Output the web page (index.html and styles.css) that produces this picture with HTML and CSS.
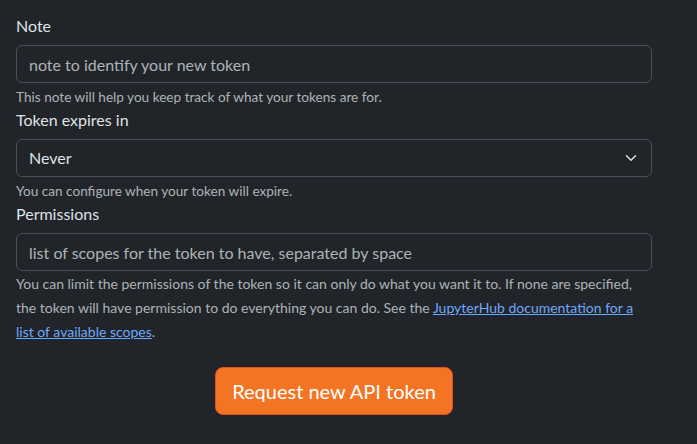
FILE: index.html
```html
<!DOCTYPE html>
<html lang="en">
<head>
<meta charset="utf-8">
<title>Token</title>
<link rel="stylesheet" href="styles.css">
</head>
<body>
<form class="form">
  <div class="field">
    <label class="label" for="note">Note</label>
    <input class="control" id="note" type="text" placeholder="note to identify your new token">
    <div class="help">This note will help you keep track of what your tokens are for.</div>
  </div>
  <div class="field">
    <label class="label" for="exp">Token expires in</label>
    <div class="control select" id="exp">
      <span>Never</span>
      <svg class="chev" width="16" height="12" viewBox="0 0 16 16"><path d="m2 5 6 6 6-6" fill="none" stroke="#dee2e6" stroke-linecap="round" stroke-linejoin="round" stroke-width="2"/></svg>
    </div>
    <div class="help">You can configure when your token will expire.</div>
  </div>
  <div class="field">
    <label class="label" for="scopes">Permissions</label>
    <input class="control" id="scopes" type="text" placeholder="list of scopes for the token to have, separated by space">
    <div class="help long">You can limit the permissions of the token so it can only do what you want it to. If none are specified, the token will have permission to do everything you can do. See the <a href="#" class="link">JupyterHub documentation for a list of available scopes</a>.</div>
  </div>
  <div class="actions">
    <button type="button" class="btn">Request new API token</button>
  </div>
</form>
</body>
</html>
```
FILE: styles.css
```css
html, body {
  margin: 0;
  padding: 0;
  background: #212529;
}
body {
  font-family: Lato, "Open Sans", sans-serif;
  font-size: 16px;
  line-height: 24px;
  color: #dee2e6;
}
.form {
  width: 636px;
  padding: 14px 45px 0 16px;
}
.field {
  display: flex;
  flex-direction: column;
}
.label {
  margin-bottom: 7px;
}
.control {
  box-sizing: border-box;
  height: 38px;
  width: 100%;
  padding: 6px 12px;
  font: inherit;
  color: #dee2e6;
  background: #212529;
  border: 1px solid #495057;
  border-radius: 6px;
  outline: none;
}
.control::placeholder {
  color: rgba(222, 226, 230, 0.75);
}
.select {
  display: flex;
  align-items: center;
  justify-content: space-between;
  padding-right: 12px;
}
.chev {
  display: block;
}
.help {
  margin-top: 4px;
  font-size: 13.6px;
  line-height: 21px;
  color: rgba(222, 226, 230, 0.75);
}
.help.long {
  margin-top: 1px;
  font-size: 14px;
  line-height: 24px;
}
.link {
  color: #6ea8fe;
}
.actions {
  display: flex;
  justify-content: center;
  padding-top: 23px;
}
.btn {
  font: inherit;
  font-size: 20px;
  line-height: 30px;
  padding: 8px 16px;
  color: #fff;
  background: #f37524;
  border: 1px solid #e34f21;
  border-radius: 8px;
}
```
